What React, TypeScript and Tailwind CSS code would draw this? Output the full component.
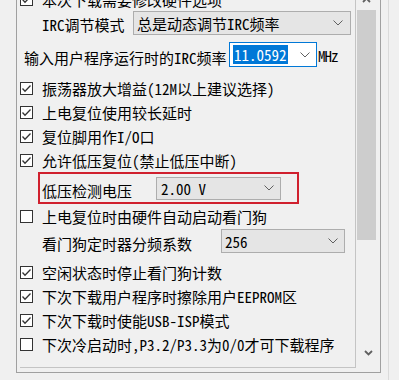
import React from "react";

const FONT = {
    fontFamily:
        "'Noto Sans Mono CJK SC', 'Noto Sans CJK SC', 'Liberation Sans', sans-serif",
};

function Check({ on }: { on: boolean }) {
    return (
        <div className="w-[13px] h-[13px] border border-[#333333] bg-white flex items-center justify-center shrink-0">
            {on && (
                <svg width="11" height="11" viewBox="0 0 11 11">
                    <polyline
                        points="1.5,5.5 4,8.2 9.5,2.5"
                        fill="none"
                        stroke="#333333"
                        strokeWidth="1.3"
                    />
                </svg>
            )}
        </div>
    );
}

function Chevron({ color = "#606060" }: { color?: string }) {
    return (
        <svg width="10" height="6" viewBox="0 0 10 6">
            <polyline
                points="0.5,0.5 5,5 9.5,0.5"
                fill="none"
                stroke={color}
                strokeWidth="1"
            />
        </svg>
    );
}

function CheckRow({ on, label }: { on: boolean; label: string }) {
    return (
        <div className="h-[24px] flex items-center shrink-0">
            <Check on={on} />
            <span className="ml-[9px] whitespace-nowrap">{label}</span>
        </div>
    );
}

function Combo({
    value,
    width,
    height,
    padL,
    padR,
}: {
    value: string;
    width: string;
    height: string;
    padL: string;
    padR: string;
}) {
    return (
        <div
            className={`${width} ${height} ${padL} ${padR} bg-[#e5e5e5] border border-[#adadad] flex items-center justify-between shrink-0`}
        >
            <span className="whitespace-nowrap pt-[1px]">{value}</span>
            <Chevron />
        </div>
    );
}

export default function App() {
    return (
        <div
            className="w-[399px] h-[380px] bg-[#f0f0f0] overflow-hidden text-[15px] leading-none text-black flex"
            style={FONT}
        >
            <div className="ml-[16px] w-[365px] h-[373px] border-l border-r border-b border-[#a0a0a0] flex pb-[4px] shrink-0">
                {/* option list */}
                <div className="ml-[3px] w-[336px] h-[368px] border-r border-b border-[#c4c4c4] overflow-hidden flex flex-col">
                    <div className="-mt-[13px]">
                        <CheckRow on={true} label="本次下载需要修改硬件选项" />
                    </div>
                    <div className="h-[24px] flex items-center shrink-0">
                        <span className="w-[113px] pl-[22px] pt-[3px] whitespace-nowrap">
                            IRC调节模式
                        </span>
                        <Combo
                            value="总是动态调节IRC频率"
                            width="w-[218px]"
                            height="h-[24px]"
                            padL="pl-[3px]"
                            padR="pr-[7px]"
                        />
                    </div>
                    <div className="mt-[7px] h-[25px] flex items-center shrink-0">
                        <span className="w-[209px] pl-[4px] pt-[6px] whitespace-nowrap">
                            输入用户程序运行时的IRC频率
                        </span>
                        <div className="w-[88px] h-[25px] bg-white border border-[#0078d7] flex items-center justify-between pl-[3px] pr-[6px] shrink-0">
                            <span className="bg-[#0078d7] text-white px-[1px] h-[19px] flex items-center">
                                11.0592
                            </span>
                            <Chevron />
                        </div>
                        <span className="ml-[1px] pt-[2px] tracking-[-1px] whitespace-nowrap">MHz</span>
                    </div>
                    <div className="mt-[9px] flex flex-col">
                        <CheckRow on={true} label="振荡器放大增益(12M以上建议选择)" />
                        <CheckRow on={true} label="上电复位使用较长延时" />
                        <CheckRow on={true} label="复位脚用作I/O口" />
                        <CheckRow on={true} label="允许低压复位(禁止低压中断)" />
                    </div>
                    <div className="ml-[18px] w-[261px] h-[32px] border-2 border-[#d0202e] flex items-center shrink-0">
                        <span
                            className="w-[116px] pl-[2px] pt-[4px] whitespace-nowrap text-black"
                            style={{ fontFamily: "'Noto Sans CJK SC', sans-serif" }}
                        >
                            低压检测电压
                        </span>
                        <Combo
                            value="2.00 V"
                            width="w-[125px]"
                            height="h-[23px]"
                            padL="pl-[4px]"
                            padR="pr-[6px]"
                        />
                    </div>
                    <CheckRow on={false} label="上电复位时由硬件自动启动看门狗" />
                    <div className="h-[26px] flex items-center shrink-0">
                        <span className="w-[201px] pl-[22px] pt-[5px] whitespace-nowrap">
                            看门狗定时器分频系数
                        </span>
                        <Combo
                            value="256"
                            width="w-[124px]"
                            height="h-[24px]"
                            padL="pl-[3px]"
                            padR="pr-[6px]"
                        />
                    </div>
                    <div className="mt-[6px] flex flex-col">
                        <CheckRow on={true} label="空闲状态时停止看门狗计数" />
                        <CheckRow on={true} label="下次下载用户程序时擦除用户EEPROM区" />
                        <CheckRow on={true} label="下次下载时使能USB-ISP模式" />
                        <CheckRow on={false} label="下次冷启动时,P3.2/P3.3为0/0才可下载程序" />
                    </div>
                </div>
                {/* scrollbar */}
                <div className="w-[24px] flex flex-col items-center shrink-0">
                    <div className="h-[10px] w-full relative overflow-hidden">
                        <svg
                            className="absolute left-[6px] -top-[3px]"
                            width="9"
                            height="6"
                            viewBox="0 0 9 6"
                        >
                            <polyline
                                points="1,5 4.5,1.5 8,5"
                                fill="none"
                                stroke="#606060"
                                strokeWidth="1.8"
                            />
                        </svg>
                    </div>
                    <div className="w-[19px] h-[230px] bg-[#cdcdcd] -ml-[3px]"></div>
                    <div className="flex-1"></div>
                    <div className="h-[20px] flex items-start justify-center pt-[2px]">
                        <svg width="9" height="6" viewBox="0 0 9 6">
                            <polyline
                                points="1,1 4.5,4.5 8,1"
                                fill="none"
                                stroke="#606060"
                                strokeWidth="1.8"
                            />
                        </svg>
                    </div>
                </div>
            </div>
            <div className="ml-[7px] w-[1px] h-full bg-[#dadada] shrink-0"></div>
        </div>
    );
}
